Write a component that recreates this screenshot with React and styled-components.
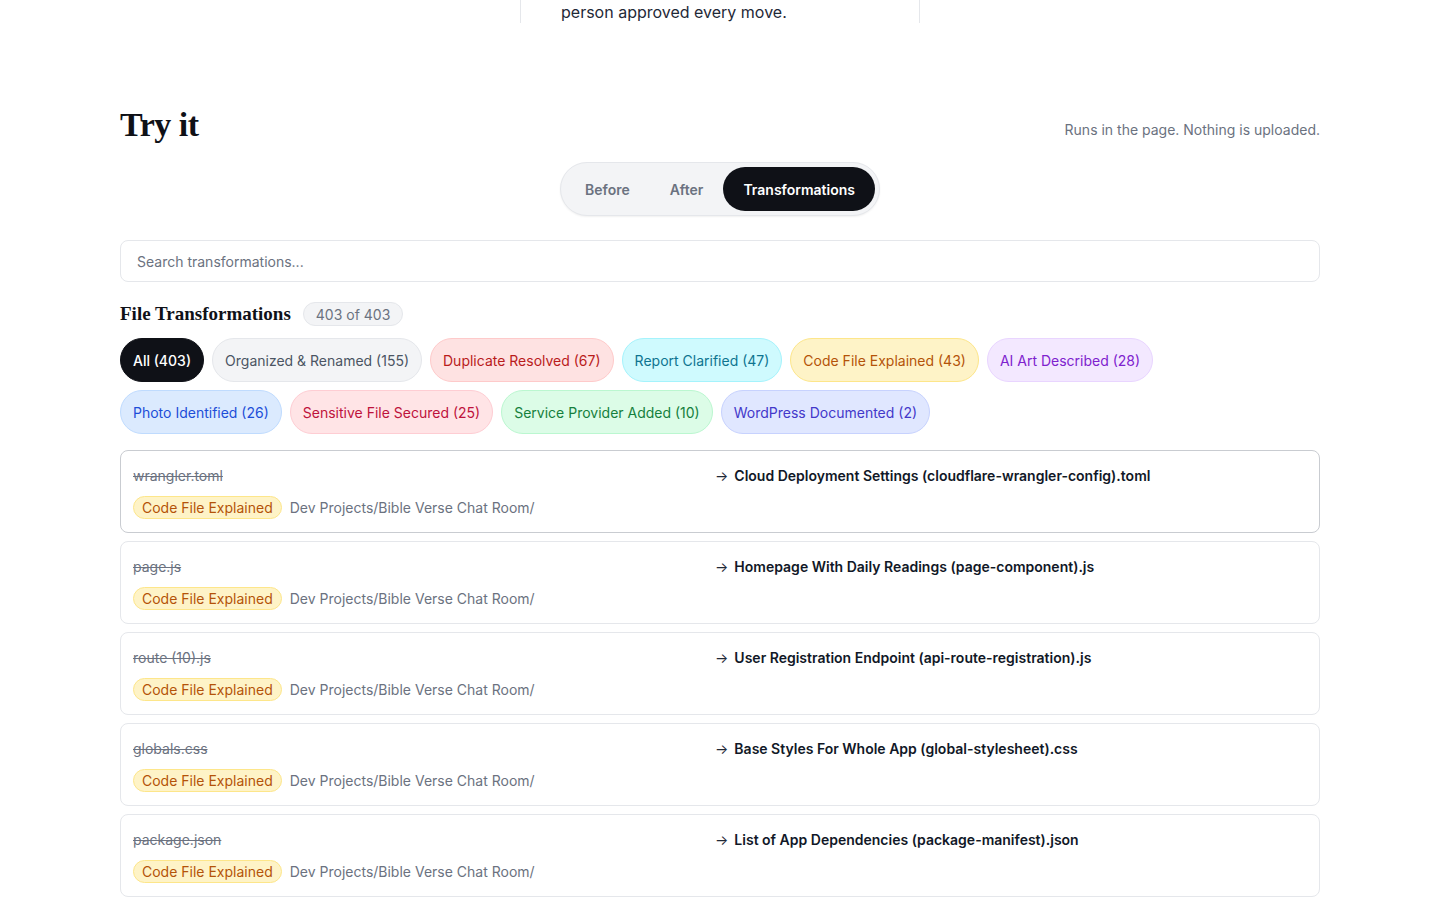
import styled, { createGlobalStyle } from "styled-components";

const GlobalStyle = createGlobalStyle`
  * { box-sizing: border-box; }
  body {
    margin: 0;
    background: #ffffff;
    font-family: Inter, "Noto Sans", "Liberation Sans", sans-serif;
    color: #111827;
  }
`;

const chipTones = {
  all: { bg: "#0f1117", border: "#0f1117", color: "#ffffff" },
  gray: { bg: "#f3f4f6", border: "#e5e7eb", color: "#4b5563" },
  red: { bg: "#fee2e2", border: "#fecaca", color: "#b91c1c" },
  cyan: { bg: "#cffafe", border: "#a5f3fc", color: "#0e7490" },
  amber: { bg: "#fef3c7", border: "#fde68a", color: "#b45309" },
  purple: { bg: "#f3e8ff", border: "#e9d5ff", color: "#7e22ce" },
  blue: { bg: "#dbeafe", border: "#bfdbfe", color: "#1d4ed8" },
  rose: { bg: "#ffe4e6", border: "#fecdd3", color: "#be123c" },
  green: { bg: "#dcfce7", border: "#bbf7d0", color: "#15803d" },
  indigo: { bg: "#e0e7ff", border: "#c7d2fe", color: "#4338ca" },
};

const filters = [
  { label: "All (403)", tone: "all" },
  { label: "Organized & Renamed (155)", tone: "gray" },
  { label: "Duplicate Resolved (67)", tone: "red" },
  { label: "Report Clarified (47)", tone: "cyan" },
  { label: "Code File Explained (43)", tone: "amber" },
  { label: "AI Art Described (28)", tone: "purple" },
  { label: "Photo Identified (26)", tone: "blue" },
  { label: "Sensitive File Secured (25)", tone: "rose" },
  { label: "Service Provider Added (10)", tone: "green" },
  { label: "WordPress Documented (2)", tone: "indigo" },
];

const rows = [
  { from: "wrangler.toml", to: "Cloud Deployment Settings (cloudflare-wrangler-config).toml" },
  { from: "page.js", to: "Homepage With Daily Readings (page-component).js" },
  { from: "route (10).js", to: "User Registration Endpoint (api-route-registration).js" },
  { from: "globals.css", to: "Base Styles For Whole App (global-stylesheet).css" },
  { from: "package.json", to: "List of App Dependencies (package-manifest).json" },
];

const App = () => {
  return (
    <>
      <GlobalStyle />
      <Page>
        <StoryStrip>
          <span />
          <StoryCell>
            <p>person approved every move.</p>
          </StoryCell>
          <span />
        </StoryStrip>

        <Section>
          <HeadRow>
            <Title>Try it</Title>
            <Note>Runs in the page. Nothing is uploaded.</Note>
          </HeadRow>

          <TabsWrap>
            <Tabs>
              <Tab>Before</Tab>
              <Tab>After</Tab>
              <Tab $active>Transformations</Tab>
            </Tabs>
          </TabsWrap>

          <Search placeholder="Search transformations..." />

          <ListHead>
            <SubTitle>File Transformations</SubTitle>
            <Count>403 of 403</Count>
          </ListHead>

          <Chips>
            {filters.map((f) => (
              <Chip key={f.label} $tone={f.tone}>
                {f.label}
              </Chip>
            ))}
          </Chips>

          <List>
            {rows.map((r, i) => (
              <Row key={r.from} $hover={i === 0}>
                <Left>
                  <OldName>{r.from}</OldName>
                  <Meta>
                    <Tag>Code File Explained</Tag>
                    <Path>Dev Projects/Bible Verse Chat Room/</Path>
                  </Meta>
                </Left>
                <NewName>
                  <Arrow>→</Arrow>
                  {r.to}
                </NewName>
              </Row>
            ))}
          </List>
        </Section>
      </Page>
    </>
  );
};

export default App;

const Page = styled.div`
  width: 100%;
  padding-bottom: 40px;
`;

const StoryStrip = styled.div`
  width: 1200px;
  margin: 0 auto;
  display: grid;
  grid-template-columns: 400px 400px 400px;
  height: 23px;
  overflow: hidden;
`;

const StoryCell = styled.div`
  border-left: 1px solid #e5e7eb;
  border-right: 1px solid #e5e7eb;
  padding-left: 40px;
  p {
    margin: 0;
    font-size: 16px;
    line-height: 24px;
    color: #1f2937;
  }
`;

const Section = styled.section`
  width: 1200px;
  margin: 0 auto;
  padding-top: 82px;
`;

const HeadRow = styled.div`
  display: flex;
  justify-content: space-between;
  align-items: baseline;
`;

const Title = styled.h2`
  margin: 0;
  font-family: "Liberation Serif", "DejaVu Serif", serif;
  font-weight: 700;
  font-size: 34px;
  line-height: 40px;
  letter-spacing: -0.5px;
  color: #0f1117;
`;

const Note = styled.span`
  font-size: 14px;
  color: #6b7280;
  position: relative;
  top: -1px;
`;

const TabsWrap = styled.div`
  display: flex;
  justify-content: center;
  margin-top: 17px;
`;

const Tabs = styled.div`
  display: flex;
  padding: 4px;
  background: #f3f4f6;
  border: 1px solid #e5e7eb;
  border-radius: 999px;
  box-shadow: 0 1px 2px rgba(15, 17, 23, 0.06);
`;

const Tab = styled.button`
  border: none;
  height: 44px;
  padding: 0 20px;
  border-radius: 999px;
  font-family: inherit;
  font-size: 14px;
  font-weight: 600;
  background: ${(p) => (p.$active ? "#0f1117" : "transparent")};
  color: ${(p) => (p.$active ? "#ffffff" : "#6b7280")};
  cursor: pointer;
`;

const Search = styled.input`
  display: block;
  width: 100%;
  margin-top: 24px;
  height: 42px;
  padding: 0 16px;
  border: 1px solid #e5e7eb;
  border-radius: 8px;
  font-family: inherit;
  font-size: 14px;
  color: #111827;
  outline: none;
  &::placeholder {
    color: #6b7280;
  }
`;

const ListHead = styled.div`
  display: flex;
  align-items: center;
  gap: 12px;
  margin-top: 19px;
`;

const SubTitle = styled.h3`
  margin: 0;
  font-family: "Liberation Serif", "DejaVu Serif", serif;
  font-weight: 700;
  font-size: 19px;
  line-height: 26px;
  color: #0f1117;
`;

const Count = styled.span`
  display: inline-flex;
  align-items: center;
  height: 24px;
  padding: 0 12px;
  border-radius: 999px;
  border: 1px solid #e5e7eb;
  background: #f3f4f6;
  font-size: 14px;
  color: #6b7280;
`;

const Chips = styled.div`
  display: flex;
  flex-wrap: wrap;
  gap: 8px;
  margin-top: 11px;
`;

const Chip = styled.button`
  height: 44px;
  padding: 0 12px;
  border-radius: 999px;
  font-family: inherit;
  font-size: 14px;
  font-weight: ${(p) => (p.$tone === "all" ? 500 : 400)};
  background: ${(p) => chipTones[p.$tone].bg};
  border: 1px solid ${(p) => chipTones[p.$tone].border};
  color: ${(p) => chipTones[p.$tone].color};
  cursor: pointer;
`;

const List = styled.div`
  display: flex;
  flex-direction: column;
  gap: 8px;
  margin-top: 16px;
`;

const Row = styled.div`
  display: grid;
  grid-template-columns: 581px 1fr;
  padding: 13px 12px 13px;
  border: 1px solid ${(p) => (p.$hover ? "#c9ccd1" : "#e5e7eb")};
  border-radius: 8px;
  background: #ffffff;
`;

const Left = styled.div`
  display: flex;
  flex-direction: column;
  gap: 7px;
`;

const OldName = styled.span`
  font-size: 14px;
  line-height: 24px;
  color: #6b7280;
  text-decoration: line-through;
`;

const Meta = styled.div`
  display: flex;
  align-items: center;
  gap: 8px;
  height: 24px;
`;

const Tag = styled.span`
  display: inline-flex;
  align-items: center;
  height: 23px;
  padding: 0 8px;
  border-radius: 999px;
  background: #fef3c7;
  border: 1px solid #fde68a;
  color: #b45309;
  font-size: 14px;
`;

const Path = styled.span`
  font-size: 14px;
  color: #6b7280;
`;

const NewName = styled.span`
  font-size: 14px;
  line-height: 24px;
  font-weight: 600;
  color: #111827;
`;

const Arrow = styled.span`
  font-weight: 400;
  color: #1f2937;
  margin-right: 6px;
  margin-left: 1px;
`;
